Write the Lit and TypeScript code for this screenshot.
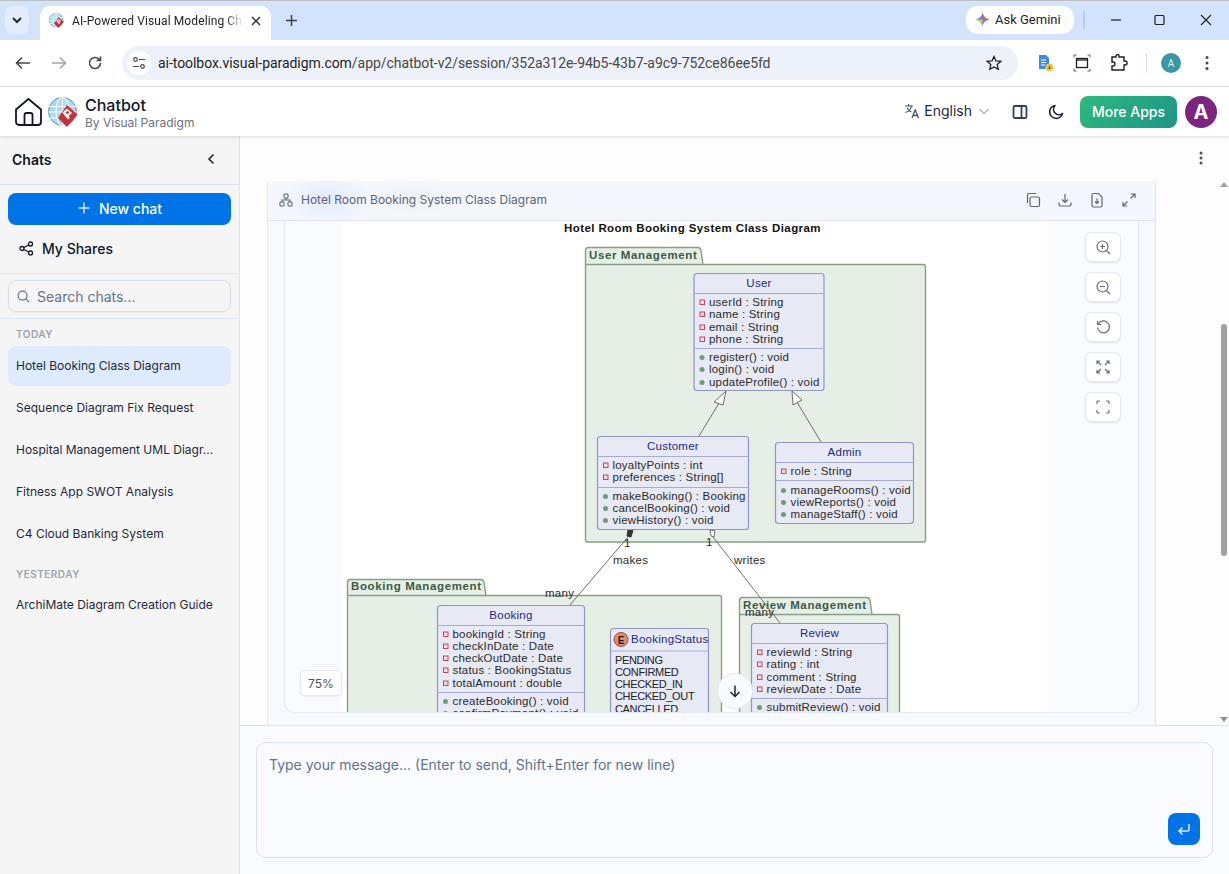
import { LitElement, html, css, svg } from 'lit';
import { customElement } from 'lit/decorators.js';

type Row = [string, number];
interface UmlClass {
  x: number; y: number; w: number; h: number; name: string; titleY: number;
  sep: number; sep2: number; attrs: Row[]; methods: Row[];
}

const CLASSES: UmlClass[] = [
  { x: 694, y: 273.5, w: 130, h: 117, name: 'User', titleY: 283, sep: 293.5, sep2: 348.5,
    attrs: [['userId : String', 302], ['name : String', 314], ['email : String', 327], ['phone : String', 339]],
    methods: [['register() : void', 357], ['login() : void', 369], ['updateProfile() : void', 382]] },
  { x: 597.5, y: 436.5, w: 151, h: 93, name: 'Customer', titleY: 446, sep: 456.5, sep2: 487.5,
    attrs: [['loyaltyPoints : int', 465], ['preferences : String[]', 477]],
    methods: [['makeBooking() : Booking', 496], ['cancelBooking() : void', 508], ['viewHistory() : void', 520]] },
  { x: 775.5, y: 442.5, w: 138, h: 81, name: 'Admin', titleY: 452, sep: 462.5, sep2: 480.5,
    attrs: [['role : String', 471]],
    methods: [['manageRooms() : void', 490], ['viewReports() : void', 502], ['manageStaff() : void', 514]] },
  { x: 437.5, y: 605.5, w: 147, h: 130, name: 'Booking', titleY: 615, sep: 625.5, sep2: 692.5,
    attrs: [['bookingId : String', 634], ['checkInDate : Date', 646], ['checkOutDate : Date', 658], ['status : BookingStatus', 670], ['totalAmount : double', 683]],
    methods: [['createBooking() : void', 701], ['confirmPayment() : void', 713]] },
  { x: 751.5, y: 623.5, w: 136, h: 110, name: 'Review', titleY: 633, sep: 643.5, sep2: 698.5,
    attrs: [['reviewId : String', 652], ['rating : int', 664], ['comment : String', 677], ['reviewDate : Date', 689]],
    methods: [['submitReview() : void', 707]] },
];

const pkg = (x: number, top: number, tabEnd: number, bodyY: number, right: number, bottom: number, label: string, labelY: number) => svg`
  <path class="pkg" d="M${x} ${bodyY} V${top + 3} q0 -3 3 -3 H${tabEnd - 5} q2 0 3 3 L${tabEnd} ${bodyY} H${right - 2} q2 0 2 2 V${bottom - 2} q0 2 -2 2 H${x + 2} q-2 0 -2 -2 Z"/>
  <line class="pkg-line" x1=${x} y1=${bodyY} x2=${tabEnd} y2=${bodyY}/>
  <text class="pkg-label" x=${x + 3.5} y=${labelY + 4}>${label}</text>`;

const umlClass = (c: UmlClass) => {
  const row = (r: Row, kind: 'attr' | 'method') => svg`
    ${kind === 'attr'
      ? svg`<rect class="priv" x=${c.x + 6} y=${r[1] - 2} width="4.5" height="4.5"/>`
      : svg`<circle class="pub" cx=${c.x + 8} cy=${r[1] + 0.5} r="2.5"/>`}
    <text class="member" x=${c.x + 15} y=${r[1] + 4}>${r[0]}</text>`;
  return svg`
    <rect class="box" x=${c.x} y=${c.y} width=${c.w} height=${c.h} rx="3"/>
    <text class="cname" x=${c.x + c.w / 2} y=${c.titleY + 4} text-anchor="middle">${c.name}</text>
    <line class="box-line" x1=${c.x} x2=${c.x + c.w} y1=${c.sep} y2=${c.sep}/>
    <line class="box-line" x1=${c.x} x2=${c.x + c.w} y1=${c.sep2} y2=${c.sep2}/>
    ${c.attrs.map((r) => row(r, 'attr'))}
    ${c.methods.map((r) => row(r, 'method'))}`;
};

const diagram = () => html`
  <svg class="uml" width="705" height="492" viewBox="342 221 705 492">
    <text class="title" x="564" y="232">Hotel Room Booking System Class Diagram</text>
    ${pkg(585.5, 247.5, 703, 264.5, 925.5, 542, 'User Management', 255)}
    ${pkg(347.5, 579.5, 486, 595.5, 721.5, 760, 'Booking Management', 586)}
    ${pkg(739.5, 597.5, 872, 614.5, 899.5, 760, 'Review Management', 605)}

    <line class="edge" x1="699" y1="436" x2="718.5" y2="404"/>
    <path class="arrow" d="M726 391 L714 402 L723 405 Z"/>
    <line class="edge" x1="797.5" y1="403" x2="821" y2="442"/>
    <path class="arrow" d="M792 391 L793 405 L802 400 Z"/>
    <line class="edge" x1="628" y1="537" x2="570" y2="605"/>
    <path class="solid" d="M633 530 L628 530 L627 536 L631 537 Z"/>
    <line class="edge" x1="713" y1="537" x2="780" y2="623"/>
    <path class="arrow" d="M710 530 L715 531 L714 537 L711 536 Z"/>

    ${CLASSES.map(umlClass)}

    <rect class="box" x="610.5" y="628.5" width="98" height="110" rx="3"/>
    <circle cx="621" cy="639.5" r="7" fill="#e08b72" stroke="#9c4a3a"/>
    <text class="badge-e" x="621" y="643.5" text-anchor="middle">E</text>
    <text class="cname" x="631" y="643">BookingStatus</text>
    <line class="box-line" x1="610.5" x2="708.5" y1="651" y2="651"/>
    ${([['PENDING', 660], ['CONFIRMED', 672], ['CHECKED_IN', 684], ['CHECKED_OUT', 696], ['CANCELLED', 709]] as Row[]).map(
      (r) => svg`<text class="enum" x="615" y=${r[1] + 4}>${r[0]}</text>`)}

    <text class="edge-label" x="624" y="547">1</text>
    <text class="edge-label" x="706" y="546">1</text>
    <text class="edge-label" x="613" y="564">makes</text>
    <text class="edge-label" x="734" y="564">writes</text>
    <text class="edge-label" x="545" y="597">many</text>
    <text class="edge-label" x="745" y="616">many</text>
  </svg>`;

const logo = (size: number) => html`
  <svg width=${size} height=${size} viewBox="0 0 30 30">
    <circle cx="14.5" cy="14.5" r="14" fill="#a9dcf2" stroke="#5f93ad"/>
    <g fill="none" stroke="#fff" stroke-width="1.1">
      <ellipse cx="14.5" cy="14.5" rx="6.5" ry="14"/>
      <path d="M14.5 .5V28.5M1 9.5H28M.5 15H28.5M2 21H27"/>
    </g>
    <path d="M19 8 L29.500 17.500 L19 30 L10 21 Z" fill="#c8313a"/>
    <path d="M14.500 15.500 L19 11.500 L24 16 L20.500 19 L22 20.500 L20 22.500 Z" fill="#fff"/>
    <path d="M17.500 15.500 L19.500 13.800 L21.300 15.500 L19.300 17.200 Z" fill="#c8313a"/>
  </svg>`;

const zoomIcons = [
  svg`<circle cx="7.500" cy="7.500" r="5.500"/><path d="M7.500 5v5M5 7.500h5M11.500 11.500l3.500 3.500"/>`,
  svg`<circle cx="7.500" cy="7.500" r="5.500"/><path d="M5 7.500h5M11.500 11.500l3.500 3.500"/>`,
  svg`<path d="M3.200 5a6 6 0 1 1 -.7 3.500M2.500 2v3.500h3.500"/>`,
  svg`<path d="M2 2l4 4M2 5V2h3M14 2l-4 4M11 2h3v3M2 14l4-4M2 11v3h3M14 14l-4-4M14 11v3h-3"/>`,
  svg`<path d="M2 5V3q0-1 1-1h2M11 2h2q1 0 1 1v2M14 11v2q0 1-1 1h-2M5 14H3q-1 0-1-1v-2"/>`,
];

const chats: [string, number][] = [
  ['Hotel Booking Class Diagram', 1],
  ['Sequence Diagram Fix Request', 0],
  ['Hospital Management UML Diagr...', 0],
  ['Fitness App SWOT Analysis', 0],
  ['C4 Cloud Banking System', 0],
];

@customElement('app-root')
export class AppRoot extends LitElement {
  static styles = css`
    :host { display: flex; flex-direction: column; height: 874px; width: 1229px; overflow: hidden; background: #fff; font-family: Inter, "Liberation Sans", sans-serif; color: #0f172a; }
    svg { display: block; flex: none; }

    /* browser chrome */
    .tabstrip { height: 40px; flex: none; box-sizing: border-box; background: #d3e3fd; border-top: 1px solid #bdbdbd; display: flex; padding: 5px 0 0 5px; font-family: Roboto, "Liberation Sans", sans-serif; }
    .tablist { width: 24px; height: 28px; border-radius: 8px; background: #e3ecfb; display: flex; align-items: center; justify-content: center; }
    .tab { width: 231px; height: 34px; margin-left: 11px; background: #fff; border-radius: 10px 10px 0 0; display: flex; align-items: center; padding: 0 10px 5px 9px; box-sizing: border-box; font-size: 12px; letter-spacing: .1px; color: #1f1f1f; gap: 8px; }
    .tab-title { flex: 1; overflow: hidden; white-space: nowrap; -webkit-mask-image: linear-gradient(90deg, #000 90%, transparent); }
    .newtab { margin: 8px 0 0 14px; }
    .strip-fill { flex: 1; }
    .gemini { width: 108px; height: 28px; background: #fff; border-radius: 12px; display: flex; align-items: center; gap: 5px; padding: 0 0 2px 9px; box-sizing: border-box; font-size: 13px; color: #1f1f1f; }
    .strip-sep { width: 2px; height: 18px; background: #b6cdf2; margin: 5px 25px 0 9px; }
    .winctl { display: flex; gap: 30px; margin: 7px 16px 0 0; align-items: flex-start; }
    .toolbar { height: 47px; flex: none; box-sizing: border-box; border-bottom: 1px solid #dfe1e5; display: flex; align-items: center; padding: 0 0 0 14px; font-family: Roboto, "Liberation Sans", sans-serif; }
    .nav { display: flex; gap: 18px; margin-right: 18px; }
    .omni { width: 896px; height: 34px; border-radius: 17px; background: #edf2fa; display: flex; align-items: center; padding: 0 16px 0 5px; box-sizing: border-box; font-size: 14px; color: #1f1f1f; }
    .tune { width: 24px; height: 24px; border-radius: 50%; background: #fff; display: flex; align-items: center; justify-content: center; margin-right: 7px; }
    .url { flex: 1; white-space: nowrap; letter-spacing: -.05px; }
    .url span { color: #474747; }
    .tools { display: flex; align-items: center; gap: 19px; margin-left: 20px; }
    .tool-sep { width: 1px; height: 20px; background: #d3e3fd; margin: 0 -1px; }
    .profile { width: 20px; height: 20px; border-radius: 50%; background: #3a97a6; color: #e8f6f8; font-size: 10px; display: flex; align-items: center; justify-content: center; margin-left: -4px; }
    .menu-dots { margin-left: 5px; }

    /* app header */
    .appbar { height: 49px; flex: none; box-sizing: border-box; display: flex; align-items: center; padding: 0 12px 0 15px; box-shadow: 0 1px 3px rgba(0, 0, 0, .14); position: relative; z-index: 2; background: #fff; }
    .brand { margin-left: 6px; margin-right: auto; display: flex; align-items: center; gap: 7px; }
    .brand-text { padding-top: 3px; }
    .brand-name { font-size: 16px; line-height: 18px; color: #0f172a; font-weight: 500; }
    .brand-by { font-size: 12px; line-height: 16px; margin-top: 1px; color: #6b7280; }
    .lang { display: flex; align-items: center; font-size: 14px; gap: 4px; color: #1e293b; margin-right: 22px; padding-bottom: 2px; }
    .more { width: 97px; height: 32px; border-radius: 8px; background: linear-gradient(135deg, #2dba7e, #1e9488); color: #fff; font-size: 14px; font-weight: 500; display: flex; align-items: center; justify-content: center; margin: 0 8px 0 16px; }
    .avatar { width: 32px; height: 32px; border-radius: 50%; background: #7b2480; color: #fff; font-size: 20px; font-weight: 700; display: flex; align-items: center; justify-content: center; }

    /* sidebar */
    .body { flex: 1; min-height: 0; display: flex; }
    .side { width: 240px; flex: none; box-sizing: border-box; background: #f5f5f5; border-right: 1px solid #dbe3ef; display: flex; flex-direction: column; }
    .side-head { height: 49px; box-sizing: border-box; border-bottom: 1px solid #d8e2f0; display: flex; align-items: center; justify-content: space-between; padding: 0 24px 2px 12px; font-size: 14px; font-weight: 600; }
    .side-actions { height: 89px; box-sizing: border-box; border-bottom: 1px solid #d8e2f0; padding: 8px 8px 0; }
    .newchat { height: 32px; box-sizing: border-box; padding-bottom: 2px; border-radius: 8px; background: #0073e6; color: #fff; font-size: 14px; font-weight: 500; display: flex; align-items: center; justify-content: center; gap: 8px; }
    .shares { display: flex; align-items: center; gap: 8px; height: 32px; box-sizing: border-box; padding: 0 0 2px 11px; margin-top: 8px; font-size: 14px; font-weight: 500; }
    .searchwrap { height: 45px; box-sizing: border-box; border-bottom: 1px solid #d8e2f0; padding: 6px 8px 0; }
    .search { height: 32px; box-sizing: border-box; border: 1px solid #d5dfec; border-radius: 8px; display: flex; align-items: center; gap: 7px; padding-left: 8px; font-size: 14px; color: #64748b; box-shadow: 0 1px 2px rgba(0, 0, 0, .04); }
    .list { padding: 0 8px; }
    .group { font-size: 10px; font-weight: 600; letter-spacing: .5px; color: #9ca3af; padding-left: 8px; height: 12px; line-height: 12px; }
    .group.today { margin: 9px 0 6px; }
    .group.yesterday { margin: 14px 0 5px; }
    .chat { height: 40px; box-sizing: border-box; padding: 0 0 2px 8px; margin-bottom: 2px; display: flex; align-items: center; font-size: 12px; border-radius: 8px; color: #1e293b; white-space: nowrap; }
    .chat.on { background: #deebfc; }

    /* main column */
    .main { flex: 1; min-width: 0; display: flex; flex-direction: column; }
    .thread { flex: 1; min-height: 0; position: relative; background: #fdfdfe; padding: 45px 0 0 27px; box-sizing: border-box; overflow: hidden; }
    .dots { position: absolute; right: 26px; top: 15px; }
    .card { width: 889px; box-sizing: border-box; border: 1px solid #dfe6f1; border-width: 0 1px; background: #f6f9fe; height: 544px; }
    .card-head { height: 40px; box-sizing: border-box; border-bottom: 1px solid #dbe3ef; display: flex; align-items: center; padding: 0 18px 2px 11px; gap: 8px; font-size: 12px; color: #5b6577; background: radial-gradient(ellipse 45px 26px at 60px 18px, #e1ebfb, transparent), radial-gradient(ellipse 40px 22px at 145px 16px, #eff1f5, transparent), #f4f8fe; }
    .card-title { margin-right: auto; }
    .card-tools { display: flex; gap: 16px; }
    .frame { height: 492px; margin: 0 16px; box-sizing: border-box; border: 1px solid #e2e8f1; border-top: 0; border-radius: 0 0 10px 10px; background: #f9fbfe; padding-left: 57px; position: relative; overflow: hidden; }
    .canvas { width: 705px; height: 492px; background: #fff; }
    .zoom { position: absolute; left: 800px; top: 11px; display: flex; flex-direction: column; gap: 10px; }
    .zbtn { width: 36px; height: 30px; box-sizing: border-box; background: #fff; border: 1px solid #e6eaf0; border-radius: 7px; box-shadow: 0 1px 2px rgba(0, 0, 0, .1); display: flex; align-items: center; justify-content: center; }
    .pct { position: absolute; left: 15px; top: 449px; width: 42px; height: 26px; box-sizing: border-box; background: #fff; border: 1px solid #e2e6ec; border-radius: 5px; font-size: 12px; color: #4b5563; display: flex; align-items: center; justify-content: center; box-shadow: 0 1px 2px rgba(0, 0, 0, .06); }
    .down { position: absolute; left: 477px; top: 537px; width: 36px; height: 36px; box-sizing: border-box; border-radius: 50%; background: #f8fafd; border: 1px solid #e3e8f0; display: flex; align-items: center; justify-content: center; }
    .sb-thumb { position: absolute; right: 2px; top: 188px; width: 6px; height: 232px; border-radius: 3px; background: #a0a0a0; }
    .sb-up, .sb-dn { position: absolute; right: 1px; width: 0; height: 0; border-left: 4px solid transparent; border-right: 4px solid transparent; }
    .sb-up { top: 46px; border-bottom: 5px solid #a0a0a0; }
    .sb-dn { bottom: 3px; border-top: 5px solid #8f8f8f; }

    /* composer */
    .composer { height: 149px; flex: none; box-sizing: border-box; border-top: 1px solid #dbe3ef; background: #f9fbff; padding: 16px 16px 16px; }
    .input { height: 116px; box-sizing: border-box; border: 1px solid #d8e2f0; border-radius: 10px; padding: 13px 12px 0; font-size: 14px; color: #64748b; position: relative; }
    .send { position: absolute; right: 12px; bottom: 12px; width: 32px; height: 32px; border-radius: 8px; background: #0073e6; display: flex; align-items: center; justify-content: center; }

    /* diagram */
    .uml text { font-family: "Liberation Sans", Arial, sans-serif; font-size: 11.5px; letter-spacing: .26px; fill: #2b2b2b; }
    .uml .member { letter-spacing: .2px; }
    .uml .title { font-weight: 700; letter-spacing: .41px; fill: #111; }
    .pkg { fill: #e5efe5; stroke: #8a9e86; stroke-width: 1.4; }
    .pkg-line { stroke: #8a9e86; stroke-width: 1.4; }
    .uml .pkg-label { font-weight: 700; letter-spacing: .62px; fill: #3d5a46; }
    .box { fill: #e7e9f5; stroke: #8f96c6; stroke-width: 1.2; }
    .box-line { stroke: #a6abd2; stroke-width: 1.2; }
    .uml .cname { fill: #1c2a86; letter-spacing: .25px; }
    .priv { fill: #f2dbe0; stroke: #c2485c; stroke-width: 1; }
    .pub { fill: #6b9e74; }
    .edge { stroke: #6e6e6e; stroke-width: 1; }
    .arrow { fill: #fff; stroke: #6e6e6e; stroke-width: 1; }
    .solid { fill: #333; stroke: #333; }
    .uml .enum { font-size: 11px; letter-spacing: -.35px; fill: #222; }
    .uml .badge-e { font-weight: 700; letter-spacing: 0; font-size: 10px; fill: #222; }
  `;

  render() {
    return html`
      <div class="tabstrip">
        <div class="tablist">
          <svg width="12" height="12" viewBox="0 0 12 12"><path d="M2 4l4 4 4-4" fill="none" stroke="#1b2a4a" stroke-width="2"/></svg>
        </div>
        <div class="tab">
          ${logo(15)}
          <div class="tab-title">AI-Powered Visual Modeling Chatbot</div>
          <svg width="10" height="10" viewBox="0 0 10 10"><path d="M1 1l8 8M9 1l-8 8" stroke="#333" stroke-width="1.500"/></svg>
        </div>
        <svg class="newtab" width="13" height="13" viewBox="0 0 13 13"><path d="M6.500 1v11M1 6.500h11" stroke="#3c4043" stroke-width="1.500"/></svg>
        <div class="strip-fill"></div>
        <div class="gemini">
          <svg width="15" height="15" viewBox="0 0 16 16">
            <path d="M8 0C8.500 4.500 11.500 7.500 16 8 11.500 8.500 8.500 11.500 8 16 7.500 11.500 4.500 8.500 0 8 4.500 7.500 7.500 4.500 8 0Z" fill="#4b8df5"/>
            <path d="M8 0C8.500 4.500 11.500 7.500 16 8H8Z" fill="#e8594a"/>
            <path d="M0 8C4.500 8.500 7.500 11.500 8 16V8Z" fill="#f3b73b"/>
          </svg>
          Ask Gemini
        </div>
        <div class="strip-sep"></div>
        <div class="winctl">
          <svg width="12" height="14" viewBox="0 0 12 14"><path d="M1 7h10" stroke="#1f1f1f" stroke-width="1.200"/></svg>
          <svg width="17" height="14" viewBox="0 0 17 14"><rect x="3" y="2.500" width="9" height="9" rx="1" fill="none" stroke="#1f1f1f" stroke-width="1.200"/></svg>
          <svg width="14" height="14" viewBox="0 0 14 14"><path d="M2 2l10 10M12 2L2 12" stroke="#1f1f1f" stroke-width="1.100"/></svg>
        </div>
      </div>

      <div class="toolbar">
        <div class="nav">
          <svg width="18" height="16" viewBox="0 0 18 16"><path d="M16 8H3M8 2.500L2.500 8 8 13.500" fill="none" stroke="#474747" stroke-width="1.600"/></svg>
          <svg width="18" height="16" viewBox="0 0 18 16"><path d="M2 8h13M10 2.500L15.500 8 10 13.500" fill="none" stroke="#a8a8a8" stroke-width="1.600"/></svg>
          <svg width="18" height="16" viewBox="0 0 18 16"><path d="M14.500 8a5.500 5.500 0 1 1-1.600-3.900L14.500 5.500M14.500 1.500v4h-4" fill="none" stroke="#474747" stroke-width="1.600"/></svg>
        </div>
        <div class="omni">
          <div class="tune">
            <svg width="14" height="14" viewBox="0 0 14 14" fill="none" stroke="#474747" stroke-width="1.200"><circle cx="3.500" cy="3.500" r="1.800"/><path d="M7 3.500h6M1 10.500h6"/><circle cx="10.500" cy="10.500" r="1.800"/></svg>
          </div>
          <div class="url">ai-toolbox.visual-paradigm.com<span>/app/chatbot-v2/session/352a312e-94b5-43b7-a9c9-752ce86ee5fd</span></div>
          <svg width="16" height="16" viewBox="0 0 16 16"><path d="M8 1.500l2 4.400 4.800.5-3.600 3.200 1 4.700L8 11.900l-4.200 2.400 1-4.700L1.200 6.400 6 5.900Z" fill="none" stroke="#1f1f1f" stroke-width="1.300"/></svg>
        </div>
        <div class="tools">
          <svg width="16" height="18" viewBox="0 0 16 18"><path d="M1 1h7l3 3v11H1Z" fill="#3a8ee8"/><path d="M3 6h5M3 8.500h5M3 11h4" stroke="#fff"/><circle cx="11.500" cy="13.500" r="4" fill="#f6c945"/><path d="M11.500 11.500v3.500M10 13.500l1.500 1.500 1.500-1.500" fill="none" stroke="#5b4a10"/></svg>
          <svg width="18" height="18" viewBox="0 0 18 18" fill="none"><rect x="3.500" y="4.500" width="11" height="9" stroke="#1f1f1f" stroke-width="1.300"/><path d="M3.500 6h11" stroke="#1f1f1f" stroke-width="1.300"/><path d="M1 3.500V1h2.500M14.500 1H17v2.500M1 14.500V17h2.500M14.500 17H17v-2.500" stroke="#2f7d32"/></svg>
          <svg width="18" height="18" viewBox="0 0 18 18"><path d="M2 3h4V2a1.500 1.500 0 0 1 3 0v1h5v4h1a2 2 0 0 1 0 4h-1v5H2v-4h1a2 2 0 0 0 0-4H2Z" fill="none" stroke="#1f1f1f" stroke-width="1.400"/></svg>
          <div class="tool-sep"></div>
          <div class="profile">A</div>
          <svg class="menu-dots" width="4" height="16" viewBox="0 0 4 16"><circle cx="2" cy="2.500" r="1.500" fill="#474747"/><circle cx="2" cy="8" r="1.500" fill="#474747"/><circle cx="2" cy="13.500" r="1.500" fill="#474747"/></svg>
        </div>
      </div>

      <div class="appbar">
        <svg width="27" height="28" viewBox="0 0 27 28"><path d="M1 11.500L13.500 1 26 11.500V24a3 3 0 0 1-3 3H4a3 3 0 0 1-3-3ZM9.500 27V17a2 2 0 0 1 2-2h4a2 2 0 0 1 2 2v10" fill="none" stroke="#111827" stroke-width="1.800" stroke-linejoin="round"/></svg>
        <div class="brand">
          ${logo(30)}
          <div class="brand-text">
            <div class="brand-name">Chatbot</div>
            <div class="brand-by">By Visual Paradigm</div>
          </div>
        </div>
        <div class="lang">
          <svg width="16" height="16" viewBox="0 0 16 16" fill="none" stroke="#475569" stroke-width="1.100"><path d="M1 3h8M4.500 1v2M7.500 3C7 6 4.500 8.500 1.500 9.500M3 5c1 2 2.500 3.500 4.500 4"/><path d="M8 15l3.200-8 3.300 8M9.200 12.500h4.300" stroke-width="1.300"/></svg>
          English
          <svg style="margin-left:2px" width="12" height="12" viewBox="0 0 12 12"><path d="M1.500 4L6 8.500 10.500 4" fill="none" stroke="#a7afbb" stroke-width="1.200"/></svg>
        </div>
        <svg width="16" height="16" viewBox="0 0 16 16" fill="none" stroke="#334155" stroke-width="1.800"><rect x="1.500" y="2" width="13" height="12" rx="1.500"/><path d="M9.500 2v12"/></svg>
        <svg style="margin-left:20px" width="16" height="16" viewBox="0 0 16 16"><path d="M7 1.500a6.500 6.500 0 1 0 7.500 8 5.500 5.500 0 0 1-7.500-8Z" fill="none" stroke="#111827" stroke-width="1.500" stroke-linejoin="round"/></svg>
        <div class="more">More Apps</div>
        <div class="avatar">A</div>
      </div>

      <div class="body">
        <aside class="side">
          <div class="side-head">
            Chats
            <svg width="8" height="12" viewBox="0 0 8 12"><path d="M6.500 1.500L2 6l4.500 4.500" fill="none" stroke="#1f2937" stroke-width="1.600"/></svg>
          </div>
          <div class="side-actions">
            <div class="newchat">
              <svg width="14" height="14" viewBox="0 0 14 14"><path d="M7 1.500v11M1.500 7h11" stroke="#dcecff" stroke-width="1.400"/></svg>
              New chat
            </div>
            <div class="shares">
              <svg width="15" height="15" viewBox="0 0 15 15" fill="none" stroke="#111827" stroke-width="1.300"><circle cx="11.500" cy="3" r="2"/><circle cx="3" cy="7.500" r="2"/><circle cx="11.500" cy="12" r="2"/><path d="M5 6.500l4.700-2.500M5 8.500l4.700 2.500"/></svg>
              My Shares
            </div>
          </div>
          <div class="searchwrap">
            <div class="search">
              <svg width="13" height="13" viewBox="0 0 14 14" fill="none" stroke="#64748b" stroke-width="1.300"><circle cx="6" cy="6" r="4.800"/><path d="M9.500 9.500L13 13"/></svg>
              Search chats...
            </div>
          </div>
          <div class="list">
            <div class="group today">TODAY</div>
            ${chats.map(([name, on]) => html`<div class="chat ${on ? 'on' : ''}">${name}</div>`)}
            <div class="group yesterday">YESTERDAY</div>
            <div class="chat">ArchiMate Diagram Creation Guide</div>
          </div>
        </aside>

        <main class="main">
          <div class="thread">
            <svg class="dots" width="4" height="14" viewBox="0 0 4 14"><circle cx="2" cy="2" r="1.500" fill="#4b5563"/><circle cx="2" cy="7" r="1.500" fill="#4b5563"/><circle cx="2" cy="12" r="1.500" fill="#4b5563"/></svg>
            <div class="card">
              <div class="card-head">
                <svg width="14" height="14" viewBox="0 0 14 14" fill="none" stroke="#5b6577" stroke-width="1.100"><rect x="5" y="1" width="4" height="4" rx=".8"/><rect x="1" y="9" width="4" height="4" rx=".8"/><rect x="9" y="9" width="4" height="4" rx=".8"/><path d="M7 5v2M3 9V7h8v2"/></svg>
                <div class="card-title">Hotel Room Booking System Class Diagram</div>
                <div class="card-tools">
                  <svg width="16" height="16" viewBox="0 0 16 16" fill="none" stroke="#5b6577" stroke-width="1.200"><rect x="5" y="5" width="9.500" height="9.500" rx="1.500"/><path d="M2.500 11V3a1.500 1.500 0 0 1 1.500-1.500h7"/></svg>
                  <svg width="16" height="16" viewBox="0 0 16 16" fill="none" stroke="#5b6577" stroke-width="1.200"><path d="M8 2v8M5 7.500L8 10.500 11 7.500M2 10.500v2a1.500 1.500 0 0 0 1.500 1.500h9a1.500 1.500 0 0 0 1.500-1.500v-2"/></svg>
                  <svg width="16" height="16" viewBox="0 0 16 16" fill="none" stroke="#5b6577" stroke-width="1.200"><path d="M3 3a1.500 1.500 0 0 1 1.500-1.500h5L13 5v8.500a1.500 1.500 0 0 1-1.500 1.500h-7A1.500 1.500 0 0 1 3 13.500ZM8 6.500v5M6 9.500l2 2 2-2"/></svg>
                  <svg width="16" height="16" viewBox="0 0 16 16" fill="none" stroke="#5b6577" stroke-width="1.200"><path d="M9.500 6.500L14 2M10 2h4v4M6.500 9.500L2 14M2 10v4h4"/></svg>
                </div>
              </div>
              <div class="frame">
                <div class="canvas">${diagram()}</div>
                <div class="zoom">
                  ${zoomIcons.map((icon) => html`
                    <div class="zbtn"><svg width="16" height="16" viewBox="0 0 16 16" fill="none" stroke="#64707f" stroke-width="1.200">${icon}</svg></div>`)}
                </div>
                <div class="pct">75%</div>
              </div>
            </div>
            <div class="down">
              <svg width="14" height="14" viewBox="0 0 14 14"><path d="M7 1.500v11M2.500 8L7 12.500 11.500 8" fill="none" stroke="#1f2937" stroke-width="1.500"/></svg>
            </div>
            <div class="sb-up"></div>
            <div class="sb-thumb"></div>
            <div class="sb-dn"></div>
          </div>
          <div class="composer">
            <div class="input">
              Type your message... (Enter to send, Shift+Enter for new line)
              <div class="send">
                <svg width="16" height="16" viewBox="0 0 16 16"><path d="M13 3v5.500a1.500 1.500 0 0 1-1.500 1.500H3M6.500 6.500L3 10l3.500 3.500" fill="none" stroke="#dcecff" stroke-width="1.500"/></svg>
              </div>
            </div>
          </div>
        </main>
      </div>
    `;
  }
}
